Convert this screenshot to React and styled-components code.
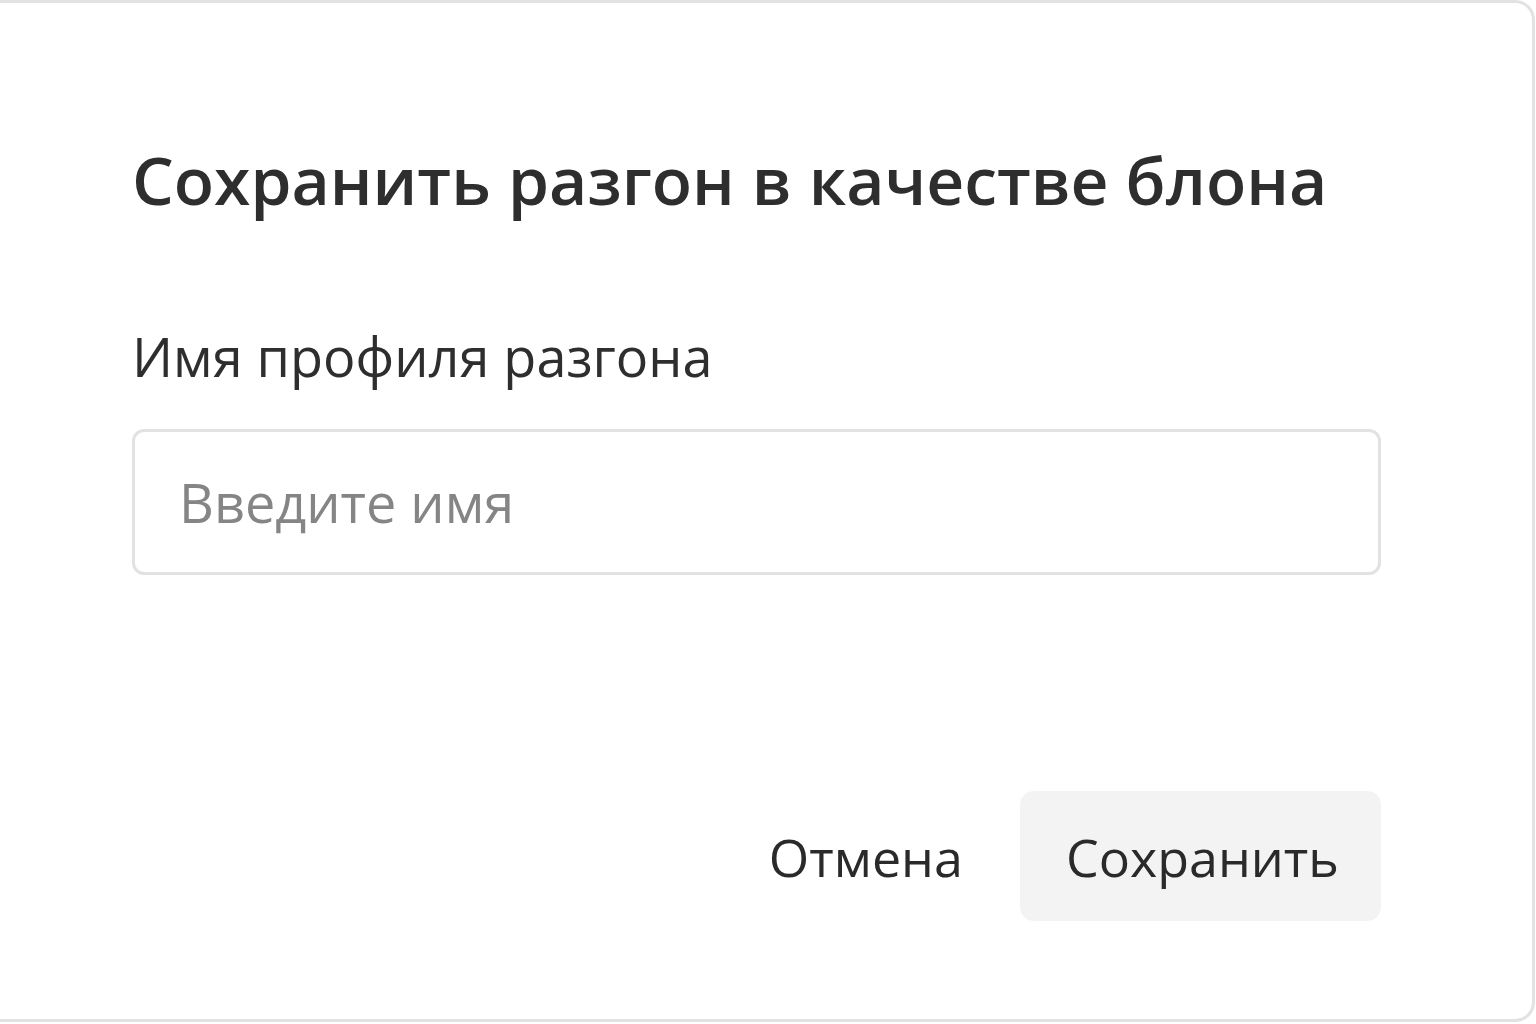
import React from 'react'
import styled, { createGlobalStyle } from 'styled-components'

const GlobalStyle = createGlobalStyle`
    html, body {
        margin: 0;
        padding: 0;
        background: #ffffff;
        overflow: hidden;
    }
    body {
        font-family: 'Open Sans', 'Noto Sans', sans-serif;
        color: #333333;
    }
`

const Page = styled.div`
    width: 1536px;
    height: 1024px;
    overflow: hidden;
`

const Dialog = styled.section`
    box-sizing: border-box;
    width: 1559px;
    height: 1022px;
    margin-left: -24px;
    border: 3px solid #e2e2e2;
    border-radius: 20px;
    background: #ffffff;
    padding: 130px 151px 98px 153px;
    display: flex;
    flex-direction: column;
`

const Title = styled.h2`
    margin: 0;
    font-size: 66px;
    font-weight: 600;
    line-height: 92px;
    color: #2e2e2e;
`

const Label = styled.label`
    margin-top: 96px;
    font-size: 54px;
    font-weight: 500;
    line-height: 70px;
    color: #2e2e2e;
`

const Input = styled.input`
    box-sizing: border-box;
    margin-top: 38px;
    width: 100%;
    height: 146px;
    border: 3px solid #e2e2e2;
    border-radius: 12px;
    padding: 0 44px;
    font-family: inherit;
    font-size: 54px;
    font-weight: 500;
    color: #333333;
    outline: none;

    &::placeholder {
        color: #858585;
    }
`

const Footer = styled.div`
    margin-top: auto;
    display: flex;
    justify-content: flex-end;
    align-items: center;
    gap: 57px;
`

const Button = styled.button`
    font-family: inherit;
    font-size: 52px;
    font-weight: 500;
    color: #2a2a2a;
    border: none;
    border-radius: 14px;
    height: 130px;
    padding: ${p => (p.$primary ? '0 42px 0 46px' : '0')};
    background: ${p => (p.$primary ? '#f3f3f3' : 'transparent')};
    cursor: pointer;
`

const App = () => (
    <Page>
        <GlobalStyle />
        <Dialog>
            <Title>Сохранить разгон в качестве блона</Title>
            <Label htmlFor="profile-name">Имя профиля разгона</Label>
            <Input id="profile-name" placeholder="Введите имя" />
            <Footer>
                <Button>Отмена</Button>
                <Button $primary>Сохранить</Button>
            </Footer>
        </Dialog>
    </Page>
)

export default App
